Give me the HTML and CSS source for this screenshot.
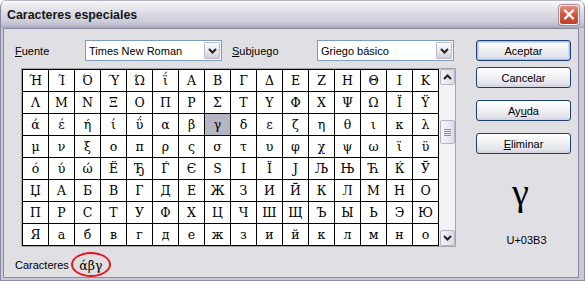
FILE: index.html
```html
<!DOCTYPE html>
<html lang="es">
<head>
<meta charset="utf-8">
<title>Caracteres especiales</title>
<link rel="stylesheet" href="styles.css">
</head>
<body>
<div class="window">
  <div class="titlebar">
    <span class="title">Caracteres especiales</span>
    <span class="close">
      <svg width="19" height="19" viewBox="0 0 19 19"><path d="M5.5 5.5 L13.5 13.5 M13.5 5.5 L5.5 13.5" stroke="#fff" stroke-width="2.4" stroke-linecap="square"/></svg>
    </span>
  </div>
  <div class="client">
    <div class="main">
      <div class="top-row">
        <span class="label label-font"><u>F</u>uente</span>
        <div class="select"><span class="select-text">Times New Roman</span><span class="drop"><svg width="9" height="6" viewBox="0 0 9 6"><path d="M1 1 L4.5 4.5 L8 1" fill="none" stroke="#222" stroke-width="2"/></svg></span></div>
        <span class="label label-sub"><u>S</u>ubjuego</span>
        <div class="select"><span class="select-text">Griego básico</span><span class="drop"><svg width="9" height="6" viewBox="0 0 9 6"><path d="M1 1 L4.5 4.5 L8 1" fill="none" stroke="#222" stroke-width="2"/></svg></span></div>
      </div>
      <div class="table-box">
        <div class="chars">
          <span>Ή</span><span>Ί</span><span>Ό</span><span>Ύ</span><span>Ώ</span><span>ΐ</span><span>Α</span><span>Β</span><span>Γ</span><span>Δ</span><span>Ε</span><span>Ζ</span><span>Η</span><span>Θ</span><span>Ι</span><span>Κ</span>
          <span>Λ</span><span>Μ</span><span>Ν</span><span>Ξ</span><span>Ο</span><span>Π</span><span>Ρ</span><span>Σ</span><span>Τ</span><span>Υ</span><span>Φ</span><span>Χ</span><span>Ψ</span><span>Ω</span><span>Ϊ</span><span>Ϋ</span>
          <span>ά</span><span>έ</span><span>ή</span><span>ί</span><span>ΰ</span><span>α</span><span>β</span><span class="sel">γ</span><span>δ</span><span>ε</span><span>ζ</span><span>η</span><span>θ</span><span>ι</span><span>κ</span><span>λ</span>
          <span>μ</span><span>ν</span><span>ξ</span><span>ο</span><span>π</span><span>ρ</span><span>ς</span><span>σ</span><span>τ</span><span>υ</span><span>φ</span><span>χ</span><span>ψ</span><span>ω</span><span>ϊ</span><span>ϋ</span>
          <span>ό</span><span>ύ</span><span>ώ</span><span>Ё</span><span>Ђ</span><span>Ѓ</span><span>Є</span><span>Ѕ</span><span>І</span><span>Ї</span><span>Ј</span><span>Љ</span><span>Њ</span><span>Ћ</span><span>Ќ</span><span>Ў</span>
          <span>Џ</span><span>А</span><span>Б</span><span>В</span><span>Г</span><span>Д</span><span>Е</span><span>Ж</span><span>З</span><span>И</span><span>Й</span><span>К</span><span>Л</span><span>М</span><span>Н</span><span>О</span>
          <span>П</span><span>Р</span><span>С</span><span>Т</span><span>У</span><span>Ф</span><span>Х</span><span>Ц</span><span>Ч</span><span>Ш</span><span>Щ</span><span>Ъ</span><span>Ы</span><span>Ь</span><span>Э</span><span>Ю</span>
          <span>Я</span><span>а</span><span>б</span><span>в</span><span>г</span><span>д</span><span>е</span><span>ж</span><span>з</span><span>и</span><span>й</span><span>к</span><span>л</span><span>м</span><span>н</span><span>о</span>
        </div>
        <div class="scrollbar">
          <span class="sb-btn"><svg width="9" height="6" viewBox="0 0 9 6"><path d="M1 5 L4.5 1.5 L8 5" fill="none" stroke="#222" stroke-width="2"/></svg></span>
          <span class="sb-thumb"><i></i><i></i><i></i><i></i></span>
          <span class="sb-btn sb-down"><svg width="9" height="6" viewBox="0 0 9 6"><path d="M1 1 L4.5 4.5 L8 1" fill="none" stroke="#222" stroke-width="2"/></svg></span>
        </div>
      </div>
      <div class="bottom-row">
        <span class="label">Caracteres</span>
        <span class="picked">άβγ</span>
      </div>
    </div>
    <div class="side">
      <span class="btn btn-default">Aceptar</span>
      <span class="btn btn-cancel">Cancelar</span>
      <span class="btn btn-gap">Ay<u>u</u>da</span>
      <span class="btn btn-gap"><u>E</u>liminar</span>
      <div class="preview">
        <span class="preview-glyph">γ</span>
        <span class="preview-code">U+03B3</span>
      </div>
    </div>
  </div>
</div>
</body>
</html>
```

FILE: styles.css
```css
* { box-sizing: border-box; }

body {
  margin: 0;
  background: #ffffff;
  font-family: "Liberation Sans", Arial, sans-serif;
  font-size: 11px;
  color: #000;
}

.window {
  width: 585px;
  height: 281px;
  display: flex;
  flex-direction: column;
  background: #c9c9d7;
  border: 1px solid #8a8aa2;
  border-top: none;
  border-radius: 7px 7px 0 0;
  overflow: hidden;
}

.titlebar {
  height: 28px;
  flex: none;
  display: flex;
  align-items: center;
  justify-content: space-between;
  padding: 0 5px 0 6px;
  background: linear-gradient(#fcfcfd 0%, #eeeef3 12%, #dcdce5 45%, #cdcdd9 75%, #b9b9ca 92%, #a3a3b8 100%);
  border-top: 1px solid #b4b4c6;
}

.title {
  font-weight: bold;
  font-size: 12.4px;
  color: #151515;
}

.close {
  width: 20px;
  height: 20px;
  border: 1px solid #f4f4f8;
  border-radius: 3px;
  background: linear-gradient(#e68d7e, #d25a44 45%, #c2402c);
  box-shadow: 0 0 0 1px #b0889a;
  display: flex;
  align-items: center;
  justify-content: center;
}

.client {
  flex: 1;
  margin: 0 5px 3px 2px;
  border: 1px solid #8a8aa2;
  background: #e0dfe3;
  display: flex;
  padding: 11px 6px 0 11px;
}

.main {
  width: 441px;
  display: flex;
  flex-direction: column;
}

.top-row {
  height: 21px;
  display: flex;
  align-items: center;
}

.label { white-space: nowrap; }
.label-font { width: 70px; }
.label-sub { width: 85px; margin-left: 10px; }

.select {
  width: 137px;
  height: 21px;
  border: 1px solid #7f9db9;
  background: #fff;
  display: flex;
  align-items: center;
  justify-content: space-between;
  padding: 1px;
}

.select-text { padding-left: 2px; }

.drop {
  width: 16px;
  height: 17px;
  border: 1px solid #b9b9c8;
  border-radius: 1px;
  background: linear-gradient(#fbfbfc, #e6e6ee 60%, #cfcfdc);
  display: flex;
  align-items: center;
  justify-content: center;
}

.table-box {
  margin: 7px 0 0 6px;
  width: 435px;
  height: 179px;
  border: 1px solid #a7a6aa;
  display: flex;
  background: #fff;
}

.chars {
  display: grid;
  grid-template-columns: repeat(16, 25px);
  grid-auto-rows: 21px;
  gap: 1px;
  padding: 1px;
  background: #000;
  width: 417px;
  height: 177px;
  font-family: "DejaVu Serif", "Liberation Serif", serif;
  font-size: 12.5px;
}

.chars span {
  background: #fff;
  display: flex;
  align-items: center;
  justify-content: center;
}

.chars .sel { background: #b4b6c3; }

.scrollbar {
  width: 16px;
  display: flex;
  flex-direction: column;
  background: #f3f3f5;
  border-left: 1px solid #eeeef2;
}

.sb-btn {
  height: 16px;
  flex: none;
  border: 1px solid #b4b4c6;
  border-radius: 2px;
  background: linear-gradient(90deg, #f4f4f8, #dcdce6);
  display: flex;
  align-items: center;
  justify-content: center;
}

.sb-down { margin-top: auto; }

.sb-thumb {
  margin-top: 35px;
  height: 24px;
  border: 1px solid #b4b4c6;
  border-radius: 2px;
  background: linear-gradient(90deg, #f6f6f9, #dedee8);
  display: flex;
  flex-direction: column;
  align-items: center;
  justify-content: center;
  gap: 1px;
}

.sb-thumb i {
  display: block;
  width: 7px;
  height: 1px;
  background: #8c8ca4;
}

.bottom-row {
  margin-top: 5px;
  height: 25px;
  display: flex;
  align-items: center;
}

.picked {
  margin-left: 2px;
  width: 40px;
  height: 25px;
  border: 2.5px solid #e8141a;
  border-radius: 50%;
  display: flex;
  align-items: center;
  justify-content: center;
  padding-top: 1px;
  font-size: 12.5px;
  font-family: "DejaVu Serif", serif;
}

.side {
  margin-left: 20px;
  width: 95px;
  display: flex;
  flex-direction: column;
}

.btn {
  height: 21px;
  flex: none;
  border: 1px solid #1c3f70;
  border-radius: 3px;
  background: linear-gradient(#ffffff, #f3f3f6 40%, #e4e4ec 80%, #d2d2de);
  display: flex;
  align-items: center;
  justify-content: center;
}

.btn-default { box-shadow: inset 0 0 0 1px #a9c2e6, inset 0 0 0 2px #c9daf2; }
.btn-cancel { margin-top: 6px; }
.btn-gap { margin-top: 12px; }

.preview {
  display: flex;
  flex-direction: column;
  align-items: center;
}

.preview-glyph {
  margin-top: 18px;
  font-family: "Liberation Serif", serif;
  font-size: 38px;
  line-height: 40px;
  padding-right: 6px;
}

.preview-code {
  margin-top: 22px;
  line-height: 13px;
  padding-left: 6px;
}
```
